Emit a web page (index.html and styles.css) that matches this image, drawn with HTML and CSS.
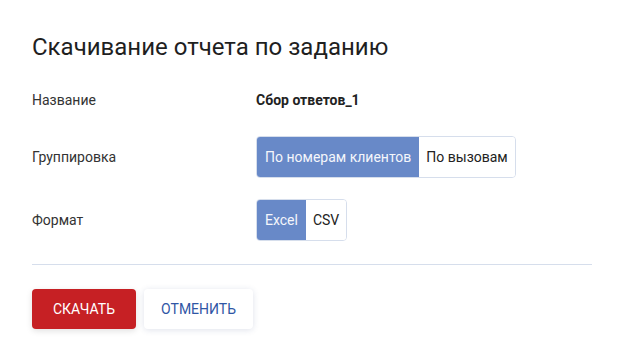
FILE: index.html
```html
<!DOCTYPE html>
<html lang="ru">
<head>
    <meta charset="UTF-8">
    <title>Скачивание отчета</title>
    <link rel="stylesheet" href="styles.css">
</head>
<body>
    <div class="dialog">
        <h2>Скачивание отчета по заданию</h2>

        <div class="row">
            <div class="label">Название</div>
            <div class="value">Сбор ответов_1</div>
        </div>

        <div class="row">
            <div class="label">Группировка</div>
            <div class="toggle">
                <button class="active">По номерам клиентов</button>
                <button>По вызовам</button>
            </div>
        </div>

        <div class="row format">
            <div class="label">Формат</div>
            <div class="toggle">
                <button class="active">Excel</button>
                <button>CSV</button>
            </div>
        </div>

        <div class="actions">
            <button class="btn primary">Скачать</button>
            <button class="btn secondary">Отменить</button>
        </div>
    </div>
</body>
</html>
```

FILE: styles.css
```css
body {
    margin: 0;
    font-family: Roboto, "Liberation Sans", sans-serif;
    color: #222;
    background: #fff;
}

.dialog {
    padding: 31px 32px 32px;
}

h2 {
    margin: 0 0 17px 0;
    font-size: 24px;
    font-weight: 400;
    line-height: 32px;
    color: #1f1f1f;
}

.row {
    display: grid;
    grid-template-columns: 224px 1fr;
    align-items: center;
    min-height: 40px;
    margin-bottom: 16px;
}

.row.format {
    margin-top: 21px;
    margin-bottom: 23px;
}

.label {
    font-size: 14px;
    color: #333;
}

.value {
    font-size: 14px;
    font-weight: 700;
    color: #222;
}

.toggle {
    display: flex;
    justify-self: start;
    height: 40px;
    border: 1px solid #d6deec;
    border-radius: 4px;
    overflow: hidden;
}

.toggle button {
    border: none;
    background: #fff;
    font-family: inherit;
    font-size: 14px;
    color: #222;
    padding: 0 7px;
    cursor: pointer;
}

.toggle button.active {
    background: #6889c8;
    color: #f4f6fb;
    padding: 0 8px;
}

.actions {
    display: flex;
    gap: 8px;
    border-top: 1px solid #d6deec;
    padding-top: 24px;
}

.btn {
    height: 40px;
    border: none;
    border-radius: 4px;
    padding: 0 21px;
    font-family: inherit;
    font-size: 14px;
    text-transform: uppercase;
    cursor: pointer;
}

.primary {
    background: #c62024;
    color: #fff;
    box-shadow: 0 2px 6px rgba(0, 0, 0, 0.12);
}

.secondary {
    padding: 0 17px;
    background: #fff;
    color: #2f56a5;
    box-shadow: 0 1px 6px rgba(40, 60, 120, 0.15);
}
```
